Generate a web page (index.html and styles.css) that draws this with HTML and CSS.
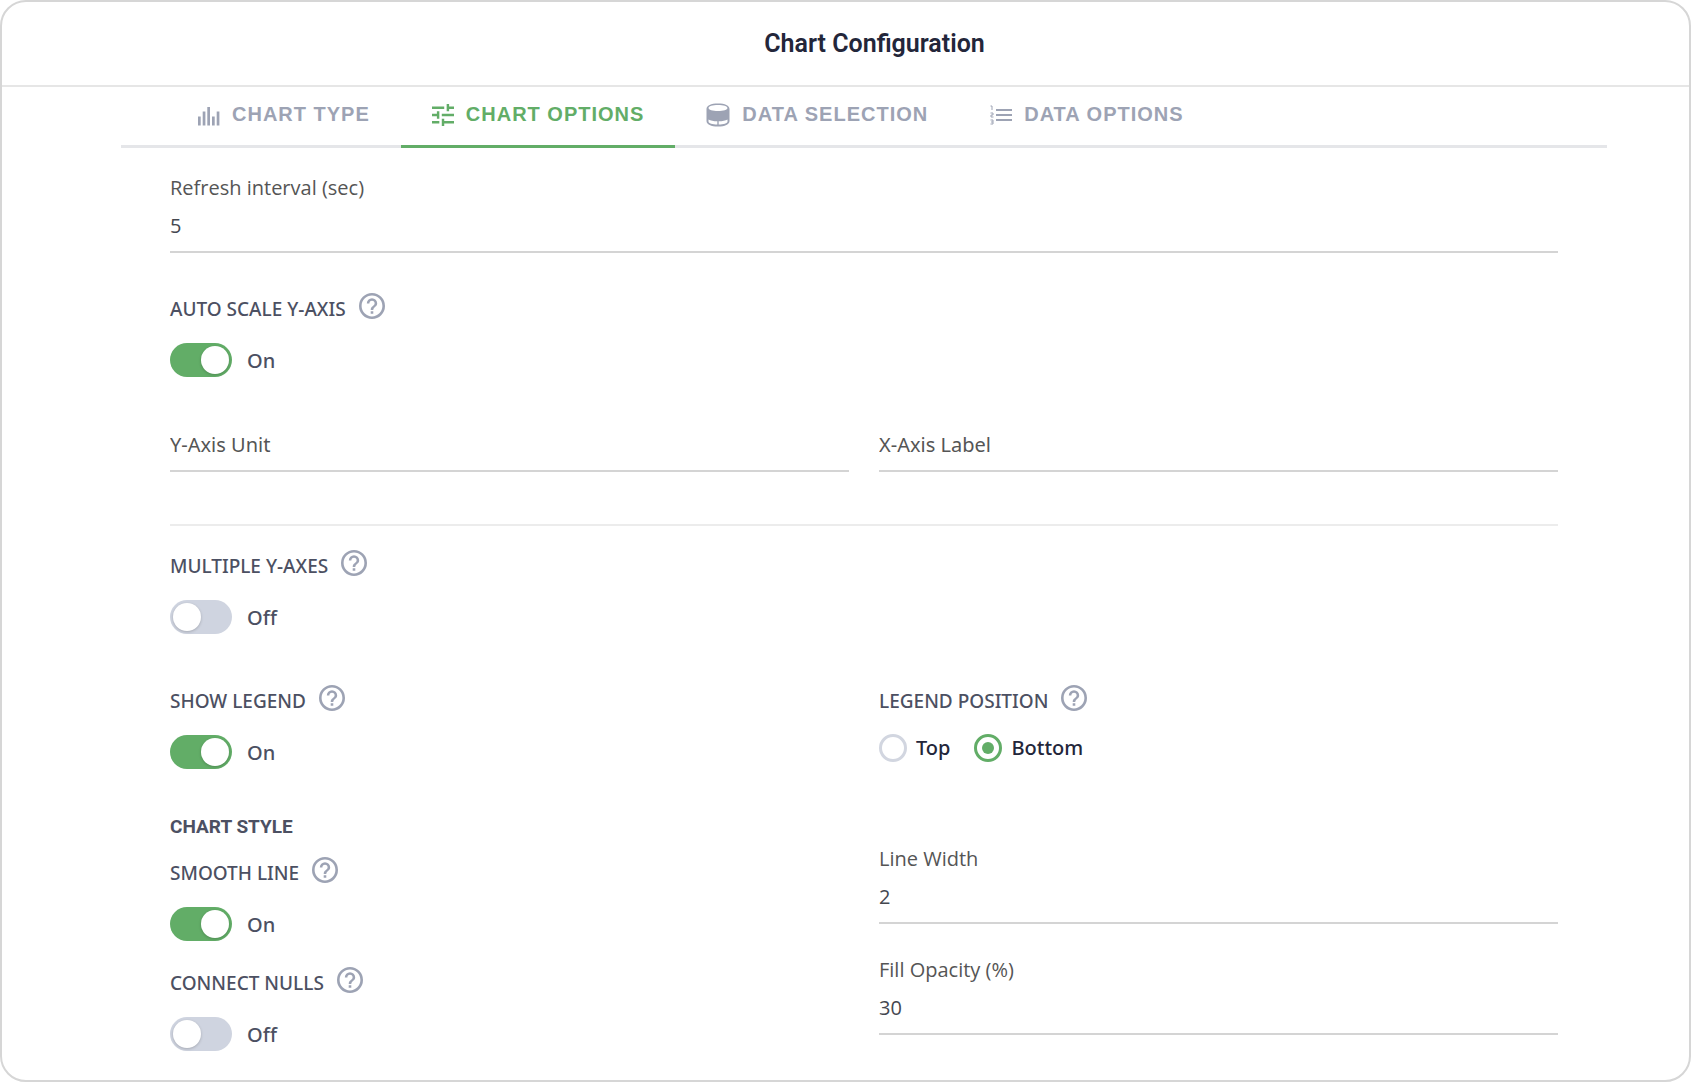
FILE: index.html
```html
<!DOCTYPE html>
<html lang="en">
<head>
<meta charset="utf-8">
<title>Chart Configuration</title>
<meta name="viewport" content="width=device-width, initial-scale=1">
<link rel="stylesheet" href="styles.css">
</head>
<body>
<svg class="sprite" aria-hidden="true">
  <symbol id="help" viewBox="2 2 20 20"><path d="M11,18H13V16H11V18M12,2A10,10 0 0,0 2,12A10,10 0 0,0 12,22A10,10 0 0,0 22,12A10,10 0 0,0 12,2M12,20C7.59,20 4,16.41 4,12C4,7.59 7.59,4 12,4C16.41,4 20,7.59 20,12C20,16.41 16.41,20 12,20M12,6A4,4 0 0,0 8,10H10A2,2 0 0,1 12,8A2,2 0 0,1 14,10C14,12 11,11.75 11,15H13C13,12.75 16,12.5 16,10A4,4 0 0,0 12,6Z"/></symbol>
</svg>
<main class="dialog">
  <header class="dialog-header"><h1 class="dialog-title">Chart Configuration</h1></header>
  <div class="dialog-body">
    <nav class="tabs">
      <button type="button" class="tab">
        <svg class="tab-icon" viewBox="0 0 22 22"><path d="M0 12.500h2.700V21.500H0zM4.700 7.500h2.700V21.500H4.700zM9.300 3h2.700V21.500H9.300zM14 12.500h2.700V21.500H14zM18.700 7.500h2.700V21.500H18.700z"/></svg>CHART TYPE</button>
      <button type="button" class="tab tab-active" aria-current="page">
        <svg class="tab-icon" viewBox="3 3 18 18"><path d="M3,17V19H9V17H3M3,5V7H13V5H3M13,21V19H21V17H13V15H11V21H13M7,9V11H3V13H7V15H9V9H7M21,13V11H11V13H21M15,9H17V7H21V5H17V3H15V9Z"/></svg>CHART OPTIONS</button>
      <button type="button" class="tab">
        <svg class="tab-icon tab-icon-wide" viewBox="0 0 24 24"><path fill-rule="evenodd" d="M12 0.500C5 0.500 0.500 2.500 0.500 6V18C0.500 21.500 5 23.500 12 23.500S23.500 21.500 23.500 18V6C23.500 2.500 19 0.500 12 0.500ZM12 2C17.500 2 21.500 3.300 21.500 5S17.500 8 12 8 2.500 6.700 2.500 5 6.500 2 12 2ZM2.500 16.500C4.500 17.700 7.500 18.300 11.300 18.300V21.500C6.500 21.500 2.500 20.500 2.500 18.500ZM21.500 16.500V18.500C21.500 20.500 17.500 21.500 12.700 21.500V18.300C16.500 18.300 19.500 17.700 21.500 16.500Z"/></svg>DATA SELECTION</button>
      <button type="button" class="tab">
        <svg class="tab-icon" viewBox="0 0 22 22"><path d="M6 5h16v2H6zM6 10h16v2H6zM6 15h16v2H6z"/><path class="digits" d="M0.500 2H2V6M0.500 9H3V11H1V13H3.500M0.500 16H3V20H0.500M1 18H3"/></svg>DATA OPTIONS</button>
    </nav>
    <form class="options">
      <div class="field">
        <label class="field-label" for="refresh">Refresh interval (sec)</label>
        <input class="field-input" id="refresh" type="text" value="5">
      </div>

      <div class="switch-field auto-scale">
        <div class="caption"><label for="autoscale">AUTO SCALE Y-AXIS</label><svg class="help"><use href="#help"/></svg></div>
        <label class="switch-row"><input class="switch" id="autoscale" type="checkbox" checked>On</label>
      </div>

      <div class="columns axis-row">
        <input class="field-input" type="text" placeholder="Y-Axis Unit" aria-label="Y-Axis Unit">
        <input class="field-input" type="text" placeholder="X-Axis Label" aria-label="X-Axis Label">
      </div>

      <hr class="divider">

      <div class="switch-field">
        <div class="caption"><label for="multi">MULTIPLE Y-AXES</label><svg class="help"><use href="#help"/></svg></div>
        <label class="switch-row"><input class="switch" id="multi" type="checkbox">Off</label>
      </div>

      <div class="columns legend-row">
        <div class="switch-field">
          <div class="caption"><label for="legend">SHOW LEGEND</label><svg class="help"><use href="#help"/></svg></div>
          <label class="switch-row"><input class="switch" id="legend" type="checkbox" checked>On</label>
        </div>
        <div role="radiogroup" aria-labelledby="position">
          <div class="caption"><span id="position">LEGEND POSITION</span><svg class="help"><use href="#help"/></svg></div>
          <div class="radios">
            <label class="radio-label"><input class="radio" type="radio" name="position">Top</label>
            <label class="radio-label"><input class="radio" type="radio" name="position" checked>Bottom</label>
          </div>
        </div>
      </div>

      <div class="columns style-row">
        <section>
          <h2 class="section-title">CHART STYLE</h2>
          <div class="switch-stack">
            <div class="switch-field">
              <div class="caption"><label for="smooth">SMOOTH LINE</label><svg class="help"><use href="#help"/></svg></div>
              <label class="switch-row"><input class="switch" id="smooth" type="checkbox" checked>On</label>
            </div>
            <div class="switch-field">
              <div class="caption"><label for="nulls">CONNECT NULLS</label><svg class="help"><use href="#help"/></svg></div>
              <label class="switch-row"><input class="switch" id="nulls" type="checkbox">Off</label>
            </div>
          </div>
        </section>
        <div class="field-stack">
          <div class="field">
            <label class="field-label" for="width">Line Width</label>
            <input class="field-input" id="width" type="text" value="2">
          </div>
          <div class="field">
            <label class="field-label" for="opacity">Fill Opacity (%)</label>
            <input class="field-input" id="opacity" type="text" value="30">
          </div>
        </div>
      </div>
    </form>
  </div>
</main>
</body>
</html>
```
FILE: styles.css
```css
* { box-sizing: border-box; }
body { margin: 0; background: #fff; font-family: "Open Sans", "Noto Sans", sans-serif; font-size: 20px; color: #4c5062; }
.sprite { position: absolute; width: 0; height: 0; }
.dialog { min-height: 100vh; border: 2px solid #d6d6d6; border-radius: 26px; background: #fff; }
.dialog-header { padding: 26px 0 25px 58px; border-bottom: 2px solid #e6e6e6; text-align: center; }
.dialog-title { margin: 0; font: 600 25px/32px Roboto, sans-serif; color: #23263a; }
.dialog-body { padding: 0 82px 24px 119px; }

.tabs { display: flex; padding-left: 46px; border-bottom: 3px solid #e5e6e9; }
.tab { display: flex; align-items: center; gap: 12px; height: 61px; margin-bottom: -3px; padding: 0 31px 4px; border: 0; border-bottom: 3px solid transparent; background: none; font: 700 20px/24px "Liberation Sans", Arial, sans-serif; letter-spacing: 1px; color: #9da3b4; }
.tab-active { border-color: #62ad67; color: #62ad67; }
.tab-icon { width: 22px; height: 22px; margin-top: 2px; fill: currentColor; }
.tab-icon-wide { width: 24px; height: 24px; }
.digits { fill: none; stroke: currentColor; }

.options { padding: 28px 49px 0; }
.field-label { display: block; line-height: 24px; color: #555; }
.field-input { display: block; width: 100%; height: 53px; padding: 0; border: 0; border-bottom: 2px solid #d4d4d4; border-radius: 0; outline: 0; background: none; font: inherit; color: #444750; }
.field-input::placeholder { color: #555; opacity: 1; }

.caption { display: flex; align-items: flex-end; gap: 13px; height: 26px; font-family: "Noto Sans", sans-serif; font-size: 19px; line-height: 20px; font-weight: 500; }
.help { width: 26px; height: 26px; fill: #9da3b4; }
.switch-row { display: flex; align-items: center; gap: 15px; width: max-content; margin-top: 24px; height: 34px; font-family: "Noto Sans", sans-serif; font-weight: 500; }
.switch { appearance: none; display: flex; align-items: center; width: 62px; height: 34px; margin: 0; padding: 0 3px; border-radius: 17px; background: #cfd4e0; }
.switch::before { content: ""; width: 28px; height: 28px; border-radius: 50%; background: #fff; box-shadow: 0 1px 3px rgba(0, 0, 0, .2); }
.switch:checked { justify-content: flex-end; background: #62ad67; }

.auto-scale { margin-top: 40px; }
.columns { display: grid; grid-template-columns: 1fr 1fr; column-gap: 30px; }
.axis-row { margin-top: 42px; font-family: "Noto Sans", sans-serif; }
.divider { margin: 52px 0 24px; border: 0; border-top: 2px solid #ececec; }
.legend-row { margin-top: 51px; }
.radios { display: flex; gap: 24px; margin-top: 23px; }
.radio-label { display: flex; align-items: center; gap: 9px; font-family: "Noto Sans", sans-serif; font-weight: 500; line-height: 28px; color: #23263a; }
.radio { appearance: none; display: grid; place-items: center; width: 28px; height: 28px; margin: 0; border: 3px solid #d2d6e0; border-radius: 50%; background: #fff; }
.radio:checked { border-color: #62ad67; }
.radio:checked::before { content: ""; width: 12px; height: 12px; border-radius: 50%; background: #62ad67; }

.style-row { margin-top: 48px; }
.section-title { margin: 0; font: 700 19px/20px Roboto, sans-serif; }
.switch-stack { display: grid; gap: 26px; margin-top: 20px; }
.field-stack { display: grid; align-content: start; gap: 34px; padding-top: 30px; }
```
